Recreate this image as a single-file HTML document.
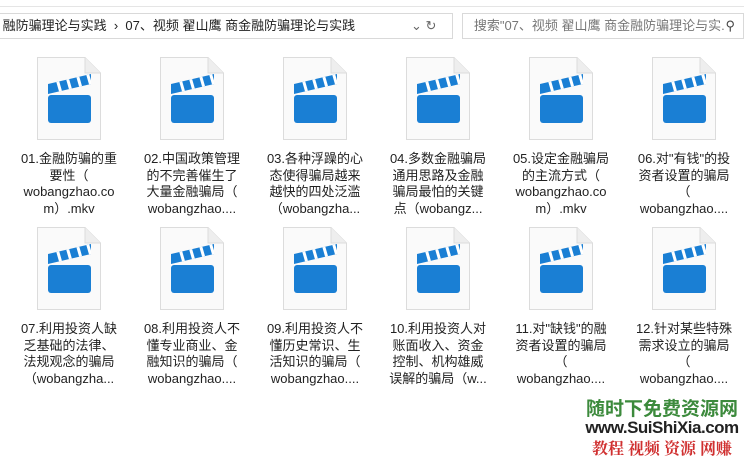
<!DOCTYPE html>
<html><head><meta charset="utf-8"><style>
body{margin:0;width:744px;height:459px;background:#fff;position:relative;overflow:hidden;font-family:"Liberation Sans","Noto Sans CJK SC",sans-serif;}
.hdr{position:absolute;left:0;top:0;width:744px;height:6px;border-bottom:1px solid #e5e5e5;}
.addr{position:absolute;left:-2px;top:13px;width:453px;height:24px;border:1px solid #d9d9d9;font-size:13px;line-height:24px;color:#222;white-space:nowrap;}
.search{position:absolute;left:462px;top:13px;width:280px;height:24px;border:1px solid #d9d9d9;font-size:13px;line-height:24px;color:#777;white-space:nowrap;overflow:hidden;}
.item{position:absolute;width:118px;text-align:center;font-size:13px;line-height:16.5px;color:#222;}
.item svg{display:block;margin:0 auto;}
.item .t{margin-top:10px;}
.wm{position:absolute;left:582px;top:398px;width:160px;text-align:center;font-weight:bold;}
</style></head><body>
<div class="hdr"></div>
<div class="addr">&nbsp;融防骗理论与实践 &nbsp;›&nbsp; 07、视频 翟山鹰 商金融防骗理论与实践<span style="position:absolute;left:412px;color:#666">⌄ ↻</span></div>
<div class="search">&nbsp;&nbsp;&nbsp;搜索"07、视频 翟山鹰 商金融防骗理论与实... <span style="position:absolute;right:8px;top:0;background:#fff;color:#444">⚲</span></div>
<svg width="0" height="0" style="position:absolute"><defs>
<clipPath id="cb"><path d="M11 27L54 17V27L11 37Z"/></clipPath>
<g id="ic">
<path d="M0.5 0.5H48L63.5 16V82.5H0.5Z" fill="#fafafa" stroke="#dcdcdc"/>
<path d="M48 0.5V16H63.5" fill="#eee" stroke="#dcdcdc"/>
<rect x="11" y="38" width="43" height="28" rx="3" fill="#1a7fd4"/>
<g clip-path="url(#cb)"><rect x="10" y="15" width="46" height="24" fill="#1a7fd4"/>
<path d="M20 22L24 36M30 20L34 34M40 17L44 31M50 15L54 29" stroke="#fff" stroke-width="3"/></g>
</g></defs></svg>
<div class="item" style="left:10px;top:57px"><svg width="64" height="84"><use href="#ic"/></svg><div class="t">01.金融防骗的重<br>要性（<br>wobangzhao.co<br>m）.mkv</div></div>
<div class="item" style="left:133px;top:57px"><svg width="64" height="84"><use href="#ic"/></svg><div class="t">02.中国政策管理<br>的不完善催生了<br>大量金融骗局（<br>wobangzhao....</div></div>
<div class="item" style="left:256px;top:57px"><svg width="64" height="84"><use href="#ic"/></svg><div class="t">03.各种浮躁的心<br>态使得骗局越来<br>越快的四处泛滥<br>（wobangzha...</div></div>
<div class="item" style="left:379px;top:57px"><svg width="64" height="84"><use href="#ic"/></svg><div class="t">04.多数金融骗局<br>通用思路及金融<br>骗局最怕的关键<br>点（wobangz...</div></div>
<div class="item" style="left:502px;top:57px"><svg width="64" height="84"><use href="#ic"/></svg><div class="t">05.设定金融骗局<br>的主流方式（<br>wobangzhao.co<br>m）.mkv</div></div>
<div class="item" style="left:625px;top:57px"><svg width="64" height="84"><use href="#ic"/></svg><div class="t">06.对"有钱"的投<br>资者设置的骗局<br>（<br>wobangzhao....</div></div>
<div class="item" style="left:10px;top:227px"><svg width="64" height="84"><use href="#ic"/></svg><div class="t">07.利用投资人缺<br>乏基础的法律、<br>法规观念的骗局<br>（wobangzha...</div></div>
<div class="item" style="left:133px;top:227px"><svg width="64" height="84"><use href="#ic"/></svg><div class="t">08.利用投资人不<br>懂专业商业、金<br>融知识的骗局（<br>wobangzhao....</div></div>
<div class="item" style="left:256px;top:227px"><svg width="64" height="84"><use href="#ic"/></svg><div class="t">09.利用投资人不<br>懂历史常识、生<br>活知识的骗局（<br>wobangzhao....</div></div>
<div class="item" style="left:379px;top:227px"><svg width="64" height="84"><use href="#ic"/></svg><div class="t">10.利用投资人对<br>账面收入、资金<br>控制、机构雄威<br>误解的骗局（w...</div></div>
<div class="item" style="left:502px;top:227px"><svg width="64" height="84"><use href="#ic"/></svg><div class="t">11.对"缺钱"的融<br>资者设置的骗局<br>（<br>wobangzhao....</div></div>
<div class="item" style="left:625px;top:227px"><svg width="64" height="84"><use href="#ic"/></svg><div class="t">12.针对某些特殊<br>需求设立的骗局<br>（<br>wobangzhao....</div></div>
<div class="wm">
<div style="color:#3c8a3c;font-size:19px;line-height:20px;font-family:'Noto Sans CJK SC',sans-serif">随时下免费资源网</div>
<div style="color:#222;font-size:17px;line-height:20px;font-family:'Liberation Sans',sans-serif;letter-spacing:-0.5px">www.SuiShiXia.com</div>
<div style="color:#d03030;font-size:16px;line-height:20px;font-family:'Noto Serif CJK SC',serif">教程 视频 资源 网赚</div>
</div>
</body></html>
